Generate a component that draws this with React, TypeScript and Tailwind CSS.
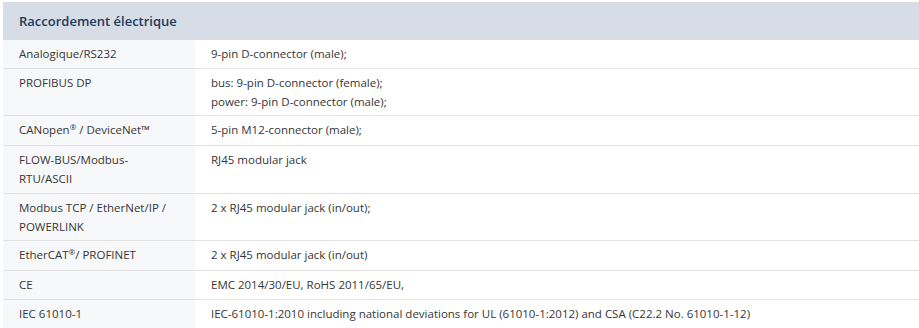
import type { ReactNode } from "react";

const Reg = () => <span className="relative -top-[4px] text-[8px]">®</span>;

const rows: [string, ReactNode, string[]][] = [
  ["a", "Analogique/RS232", ["9-pin D-connector (male);"]],
  ["b", "PROFIBUS DP", ["bus: 9-pin D-connector (female);", "power: 9-pin D-connector (male);"]],
  ["c", <>CANopen<Reg /> / DeviceNet™</>, ["5-pin M12-connector (male);"]],
  ["d", "FLOW-BUS/Modbus-RTU/ASCII", ["RJ45 modular jack"]],
  ["e", "Modbus TCP / EtherNet/IP / POWERLINK", ["2 x RJ45 modular jack (in/out);"]],
  ["f", <>EtherCAT<Reg />/ PROFINET</>, ["2 x RJ45 modular jack (in/out)"]],
  ["g", "CE", ["EMC 2014/30/EU, RoHS 2011/65/EU,"]],
  [
    "h",
    "IEC 61010-1",
    ["IEC-61010-1:2010 including national deviations for UL (61010-1:2012) and CSA (C22.2 No. 61010-1-12)"],
  ],
];

export default function App() {
  return (
    <div className="h-[328px] w-[919px] bg-white pl-[3px] pt-[2px] font-['Open_Sans',sans-serif] text-[11.5px] leading-[18.8px] text-[#363636]">
      <div className="flex h-[38px] items-center bg-[#d6dde7] px-4 text-[13px] font-semibold text-[#1f3a5c]">
        Raccordement électrique
      </div>
      {rows.map(([key, label, value]) => (
        <div key={key} className="flex border-b border-[#e2e2e2]">
          <div className="w-[192px] shrink-0 bg-[#f7f8f9] px-4 pb-[4px] pt-[5px]">
            <span className="block w-[160px]">{label}</span>
          </div>
          <div className="flex-1 px-4 pb-[4px] pt-[5px]">
            {value.map((line) => (
              <div key={line}>{line}</div>
            ))}
          </div>
        </div>
      ))}
    </div>
  );
}
